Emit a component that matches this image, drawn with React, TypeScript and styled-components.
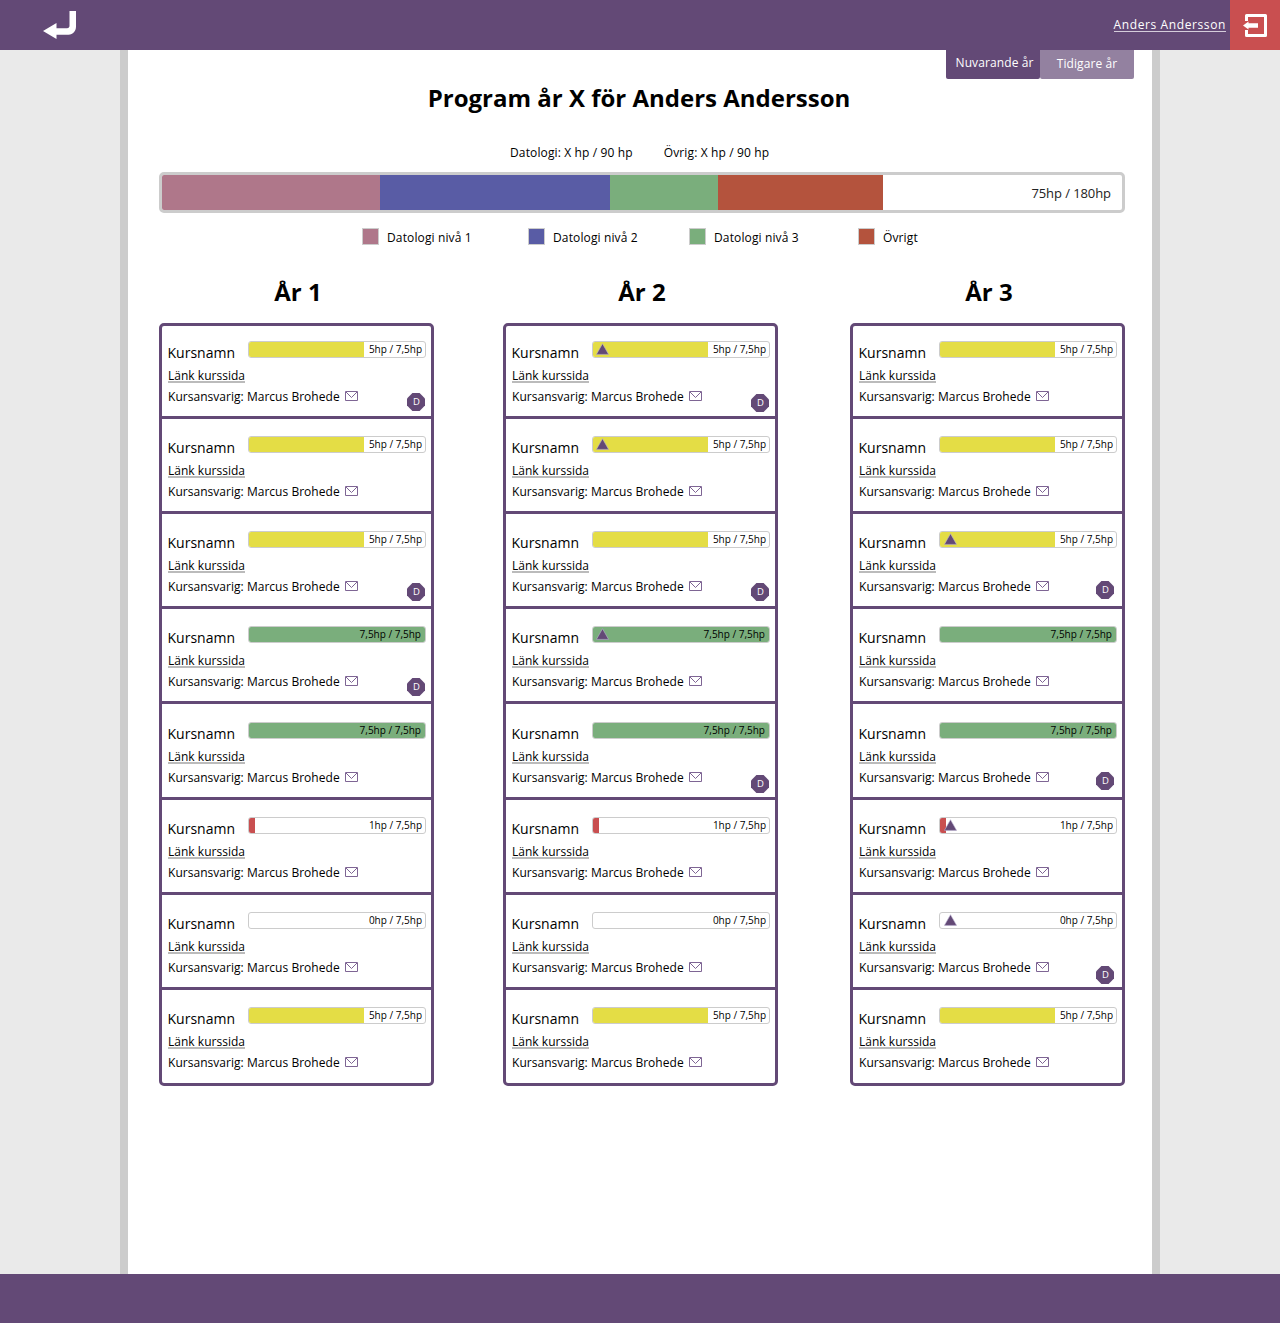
import React from "react";
import styled, { createGlobalStyle } from "styled-components";

const purple = "#634976";

const GlobalStyle = createGlobalStyle`
  * { box-sizing: border-box; }
  body {
    margin: 0;
    background: #eaeaea;
    font-family: "Open Sans", "Noto Sans", sans-serif;
    color: #000;
  }
`;

const Page = styled.div`
  display: flex;
  flex-direction: column;
  height: 1323px;
  width: 1280px;
`;

const TopBar = styled.header`
  display: flex;
  align-items: center;
  height: 50px;
  background: ${purple};
`;

const BottomBar = styled.footer`
  height: 49px;
  background: ${purple};
`;

const BackButton = styled.a`
  display: flex;
  margin-left: 43px;
  margin-right: auto;
`;

const UserLink = styled.a`
  height: 15px;
  color: #fff;
  font-size: 12px;
  font-weight: 500;
  line-height: 16px;
  letter-spacing: 0.61px;
  margin-right: 4px;
  margin-top: -1px;
  border-bottom: 1px solid #d5cddb;
  white-space: nowrap;
`;

const LogoutButton = styled.a`
  display: flex;
  align-items: center;
  justify-content: center;
  width: 50px;
  height: 50px;
  background: #c94f50;
`;

const Content = styled.main`
  flex: 1;
  width: 1040px;
  margin: 0 auto;
  padding: 0 27px 0 31px;
  background: #fff;
  border: solid #ccc;
  border-width: 0 8px;
`;

const Tabs = styled.nav`
  display: flex;
  justify-content: flex-end;
  height: 29px;
  width: 975px;
`;

const Tab = styled.a<{ $active?: boolean }>`
  width: 94px;
  height: 29px;
  padding-left: ${(p) => (p.$active ? 3 : 0)}px;
  padding-top: ${(p) => (p.$active ? 0 : 1)}px;
  border-radius: 0 0 2px 2px;
  background: ${(p) => (p.$active ? purple : "#9381a0")};
  color: #fff;
  font-size: 12px;
  font-weight: 500;
  line-height: 26px;
  text-align: center;
  letter-spacing: 0.1px;
  white-space: nowrap;
`;

const Title = styled.h1`
  margin: 0;
  padding-right: 6px;
  height: 40px;
  font-size: 24px;
  line-height: 38px;
  font-weight: 700;
  text-align: center;
`;

const Totals = styled.div`
  display: flex;
  gap: 31px;
  height: 53px;
  padding: 24px 0 0 351px;
  font-size: 12px;
  line-height: 20px;
  letter-spacing: 0.13px;
  white-space: nowrap;
`;

const TotalBar = styled.div`
  display: flex;
  width: 966px;
  height: 41px;
  background: #fff;
  border: 3px solid #ccc;
  border-radius: 5px;
  overflow: hidden;
`;

const Segment = styled.div<{ $color: string }>`
  background: ${(p) => p.$color};
`;

const TotalLabel = styled.span`
  margin-left: auto;
  padding-right: 11px;
  color: #222;
  font-size: 13px;
  line-height: 37px;
  letter-spacing: -0.08px;
`;

const Legend = styled.div`
  display: flex;
  height: 49px;
  padding: 15px 0 0 203px;
`;

const LegendItem = styled.div<{ $width: number }>`
  display: flex;
  width: ${(p) => p.$width}px;
  font-size: 12px;
  line-height: 20px;
  letter-spacing: 0.13px;
  white-space: nowrap;
`;

const Swatch = styled.span<{ $color: string }>`
  width: 17px;
  height: 17px;
  margin-right: 8px;
  border: 1px solid #ccc;
  background: ${(p) => p.$color};
`;

const Years = styled.div`
  display: grid;
  grid-template-columns: 344px 347px 275px;
`;

const Year = styled.section`
  width: 275px;
`;

const YearTitle = styled.h2`
  margin: 0;
  height: 61px;
  padding: 11px 0 0 3px;
  font-size: 24px;
  line-height: 38px;
  font-weight: 700;
  text-align: center;
`;

const CourseList = styled.div`
  border: 3px solid ${purple};
  border-radius: 5px;
`;

const Course = styled.article<{ $height: number; $top: number }>`
  position: relative;
  box-sizing: content-box;
  height: ${(p) => p.$height - p.$top}px;
  padding: ${(p) => p.$top}px 5px 0 6px;
  & + & {
    border-top: 3px solid ${purple};
  }
`;

const CourseHead = styled.div`
  display: flex;
  justify-content: space-between;
  height: 24px;
`;

const CourseName = styled.span`
  margin-left: -0.5px;
  font-size: 14px;
  line-height: 24px;
`;

const Progress = styled.div`
  position: relative;
  display: flex;
  width: 178px;
  height: 17px;
  border: 1px solid #ccc;
  border-radius: 3px;
  overflow: hidden;
`;

const Fill = styled.div<{ $color: string }>`
  background: ${(p) => p.$color};
`;

const ProgressLabel = styled.span<{ $full: boolean }>`
  position: absolute;
  right: ${(p) => (p.$full ? 4 : 3)}px;
  top: 0;
  font-size: 10px;
  line-height: 15px;
  white-space: nowrap;
`;

const Marker = styled.svg<{ $left: number }>`
  position: absolute;
  left: ${(p) => p.$left}px;
  top: 1px;
`;

const CourseLink = styled.a`
  display: block;
  width: max-content;
  height: 18px;
  font-size: 12px;
  line-height: 21px;
  letter-spacing: 0.02px;
  border-bottom: 2px solid #bbb;
`;

const Responsible = styled.div`
  display: flex;
  align-items: flex-start;
  gap: 5px;
  height: 24px;
  margin-top: 2px;
  font-size: 12px;
  line-height: 24px;
  letter-spacing: 0.03px;
  white-space: nowrap;
  svg {
    margin-top: 6px;
  }
`;

const Octagon = styled.span<{ $top: number; $left: number }>`
  position: absolute;
  top: ${(p) => p.$top}px;
  left: ${(p) => p.$left}px;
  width: 18px;
  height: 18px;
  background: ${purple};
  clip-path: polygon(30% 0, 70% 0, 100% 30%, 100% 70%, 70% 100%, 30% 100%, 0 70%, 0 30%);
  color: #fff;
  font-size: 9.5px;
  font-weight: 500;
  line-height: 17px;
  text-align: center;
  padding-left: 1px;
`;

const BackIcon = () => (
  <svg width="34" height="30" viewBox="0 0 34 30" fill="#fff">
    <path d="M26.500 1H33v15.500c0 4.500-3 8.200-7.500 8.200H13.500V29L0 21l13.500-8v5.200H24c1.700 0 2.500-.8 2.500-2.400z" />
  </svg>
);

const LogoutIcon = () => (
  <svg width="26" height="24" viewBox="0 0 26 24">
    <path d="M4.500 8V2.500h19v20h-19V17" fill="none" stroke="#fff" strokeWidth="3" strokeLinejoin="round" />
    <path d="M1 12.500l5.500-4v1.800H16v4.400H6.500v1.800z" fill="#fff" />
  </svg>
);

const MailIcon = () => (
  <svg width="13" height="10" viewBox="0 0 13 10" fill="none" stroke="#7e6594">
    <path d="M.5.5h12v9H.5z" />
    <path d="M1 1l5.500 5.500L12 1" />
  </svg>
);

const MarkerIcon = ({ left }: { left: number }) => (
  <Marker $left={left} width="13" height="13" viewBox="0 0 13 13">
    <path d="M6.500 .7L12.600 11.400H.4z" fill={purple} stroke="#b9b0d0" strokeWidth="0.6" />
  </Marker>
);

type Kind = "part" | "done" | "low" | "none";

const kinds: Record<Kind, { label: string; width: number; color: string }> = {
  part: { label: "5hp / 7,5hp", width: 115, color: "#e4dd45" },
  done: { label: "7,5hp / 7,5hp", width: 176, color: "#7aae7c" },
  low: { label: "1hp / 7,5hp", width: 6, color: "#c94f50" },
  none: { label: "0hp / 7,5hp", width: 0, color: "#fff" },
};

const rows: { kind: Kind; height: number; top: number }[] = [
  { kind: "part", height: 90, top: 15 },
  { kind: "part", height: 92, top: 17 },
  { kind: "part", height: 92, top: 17 },
  { kind: "done", height: 92, top: 17 },
  { kind: "done", height: 93, top: 18 },
  { kind: "low", height: 92, top: 17 },
  { kind: "none", height: 92, top: 17 },
  { kind: "part", height: 93, top: 17 },
];

type YearPlan = {
  name: string;
  badgeLeft: number;
  badges: Record<number, number>;
  markerLeft: number;
  markers: number[];
};

const years: YearPlan[] = [
  { name: "År 1", badgeLeft: 245, badges: { 0: 67, 2: 69, 3: 69 }, markerLeft: 3, markers: [] },
  { name: "År 2", badgeLeft: 245, badges: { 0: 68, 2: 69, 4: 71 }, markerLeft: 3, markers: [0, 1, 3] },
  { name: "År 3", badgeLeft: 243, badges: { 2: 67, 4: 68, 6: 71 }, markerLeft: 4, markers: [2, 5, 6] },
];

const segments = [
  { name: "Datologi nivå 1", color: "#af778a", width: 218, item: 166 },
  { name: "Datologi nivå 2", color: "#595ca5", width: 230, item: 161 },
  { name: "Datologi nivå 3", color: "#7aae7c", width: 108, item: 169 },
  { name: "Övrigt", color: "#b4533d", width: 165, item: 80 },
];

export default function App() {
  return (
    <Page>
      <GlobalStyle />
      <TopBar>
        <BackButton>
          <BackIcon />
        </BackButton>
        <UserLink>Anders Andersson</UserLink>
        <LogoutButton>
          <LogoutIcon />
        </LogoutButton>
      </TopBar>
      <Content>
        <Tabs>
          <Tab $active>Nuvarande år</Tab>
          <Tab>Tidigare år</Tab>
        </Tabs>
        <Title>Program år X för Anders Andersson</Title>
        <Totals>
          <span>Datologi: X hp / 90 hp</span>
          <span>Övrig: X hp / 90 hp</span>
        </Totals>
        <TotalBar>
          {segments.map((s) => (
            <Segment key={s.name} $color={s.color} style={{ width: s.width }} />
          ))}
          <TotalLabel>75hp / 180hp</TotalLabel>
        </TotalBar>
        <Legend>
          {segments.map((s) => (
            <LegendItem key={s.name} $width={s.item}>
              <Swatch $color={s.color} />
              {s.name}
            </LegendItem>
          ))}
        </Legend>
        <Years>
          {years.map((year) => (
            <Year key={year.name}>
              <YearTitle>{year.name}</YearTitle>
              <CourseList>
                {rows.map((row, i) => {
                  const k = kinds[row.kind];
                  return (
                    <Course key={i} $height={row.height} $top={row.top}>
                      <CourseHead>
                        <CourseName>Kursnamn</CourseName>
                        <Progress>
                          <Fill $color={k.color} style={{ width: k.width }} />
                          {year.markers.includes(i) && <MarkerIcon left={year.markerLeft} />}
                          <ProgressLabel $full={row.kind === "done"}>{k.label}</ProgressLabel>
                        </Progress>
                      </CourseHead>
                      <CourseLink>Länk kurssida</CourseLink>
                      <Responsible>
                        Kursansvarig: Marcus Brohede
                        <MailIcon />
                      </Responsible>
                      {year.badges[i] !== undefined && (
                        <Octagon $top={year.badges[i]} $left={year.badgeLeft}>
                          D
                        </Octagon>
                      )}
                    </Course>
                  );
                })}
              </CourseList>
            </Year>
          ))}
        </Years>
      </Content>
      <BottomBar />
    </Page>
  );
}
